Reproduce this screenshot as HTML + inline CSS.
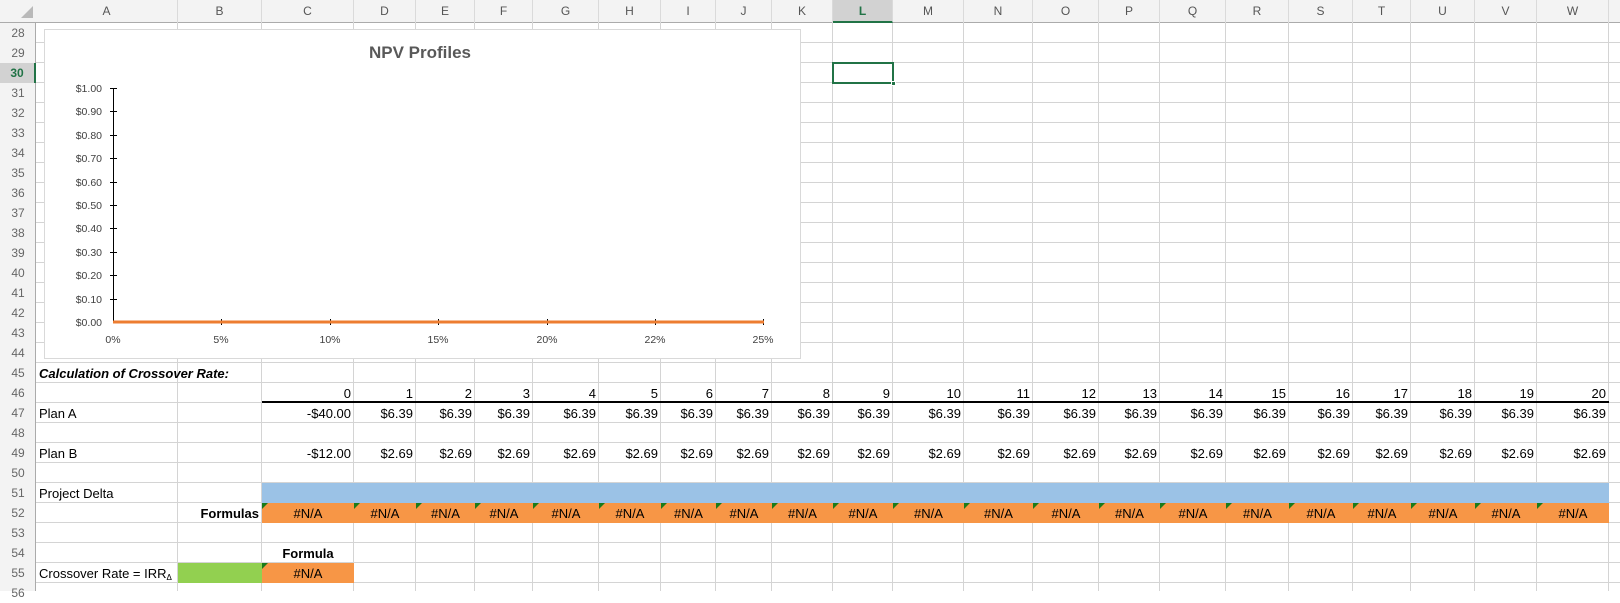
<!DOCTYPE html>
<html><head><meta charset="utf-8">
<style>
*{margin:0;padding:0;box-sizing:border-box}
body{width:1620px;height:591px;overflow:hidden;background:#fff;position:relative;font-family:"Liberation Sans",Arial,sans-serif}
.v{position:absolute;top:23px;width:1px;height:568px;background:#d4d4d4}
.h{position:absolute;left:36px;width:1584px;height:1px;background:#d4d4d4}
.ch{position:absolute;top:0;height:23px;line-height:23px;text-align:center;font-size:12px;color:#555;border-right:1px solid #dadada}
.rh{position:absolute;left:0;width:36px;height:20px;line-height:20px;text-align:center;font-size:12px;color:#666}
.t{position:absolute;height:20px;line-height:21px;font-size:13px;color:#000;white-space:nowrap;padding:0 3px}
.r{text-align:right}
.c{text-align:center}
.tri{position:absolute;width:0;height:0;border-top:6px solid #1a7a1a;border-right:6px solid transparent}
</style></head><body>
<div style="position:absolute;left:0;top:0;width:1620px;height:23px;background:#f3f3f3;border-bottom:1px solid #ababab"></div>
<div style="position:absolute;left:0;top:23px;width:36px;height:568px;background:#f3f3f3;border-right:1px solid #ababab"></div>
<svg style="position:absolute;left:20px;top:5px" width="14" height="14"><polygon points="13,1 13,13 1,13" fill="#b9b9b9"/></svg>
<div class="ch" style="left:36px;width:142px">A</div>
<div class="ch" style="left:178px;width:84px">B</div>
<div class="ch" style="left:262px;width:92px">C</div>
<div class="ch" style="left:354px;width:62px">D</div>
<div class="ch" style="left:416px;width:59px">E</div>
<div class="ch" style="left:475px;width:58px">F</div>
<div class="ch" style="left:533px;width:66px">G</div>
<div class="ch" style="left:599px;width:62px">H</div>
<div class="ch" style="left:661px;width:55px">I</div>
<div class="ch" style="left:716px;width:56px">J</div>
<div class="ch" style="left:772px;width:61px">K</div>
<div class="ch" style="left:833px;width:60px;background:#d2d2d2;color:#217346;font-weight:bold;border-bottom:2px solid #217346;line-height:22px">L</div>
<div class="ch" style="left:893px;width:71px">M</div>
<div class="ch" style="left:964px;width:69px">N</div>
<div class="ch" style="left:1033px;width:66px">O</div>
<div class="ch" style="left:1099px;width:61px">P</div>
<div class="ch" style="left:1160px;width:66px">Q</div>
<div class="ch" style="left:1226px;width:63px">R</div>
<div class="ch" style="left:1289px;width:64px">S</div>
<div class="ch" style="left:1353px;width:58px">T</div>
<div class="ch" style="left:1411px;width:64px">U</div>
<div class="ch" style="left:1475px;width:62px">V</div>
<div class="ch" style="left:1537px;width:72px">W</div>
<div class="rh" style="top:23px">28</div>
<div class="rh" style="top:43px">29</div>
<div class="rh" style="top:63px;background:#d2d2d2;color:#217346;font-weight:bold;border-right:2px solid #217346">30</div>
<div class="rh" style="top:83px">31</div>
<div class="rh" style="top:103px">32</div>
<div class="rh" style="top:123px">33</div>
<div class="rh" style="top:143px">34</div>
<div class="rh" style="top:163px">35</div>
<div class="rh" style="top:183px">36</div>
<div class="rh" style="top:203px">37</div>
<div class="rh" style="top:223px">38</div>
<div class="rh" style="top:243px">39</div>
<div class="rh" style="top:263px">40</div>
<div class="rh" style="top:283px">41</div>
<div class="rh" style="top:303px">42</div>
<div class="rh" style="top:323px">43</div>
<div class="rh" style="top:343px">44</div>
<div class="rh" style="top:363px">45</div>
<div class="rh" style="top:383px">46</div>
<div class="rh" style="top:403px">47</div>
<div class="rh" style="top:423px">48</div>
<div class="rh" style="top:443px">49</div>
<div class="rh" style="top:463px">50</div>
<div class="rh" style="top:483px">51</div>
<div class="rh" style="top:503px">52</div>
<div class="rh" style="top:523px">53</div>
<div class="rh" style="top:543px">54</div>
<div class="rh" style="top:563px">55</div>
<div class="rh" style="top:583px">56</div>
<div class="v" style="left:177px"></div><div class="v" style="left:261px"></div><div class="v" style="left:353px"></div><div class="v" style="left:415px"></div><div class="v" style="left:474px"></div><div class="v" style="left:532px"></div><div class="v" style="left:598px"></div><div class="v" style="left:660px"></div><div class="v" style="left:715px"></div><div class="v" style="left:771px"></div><div class="v" style="left:832px"></div><div class="v" style="left:892px"></div><div class="v" style="left:963px"></div><div class="v" style="left:1032px"></div><div class="v" style="left:1098px"></div><div class="v" style="left:1159px"></div><div class="v" style="left:1225px"></div><div class="v" style="left:1288px"></div><div class="v" style="left:1352px"></div><div class="v" style="left:1410px"></div><div class="v" style="left:1474px"></div><div class="v" style="left:1536px"></div><div class="v" style="left:1608px"></div>
<div class="h" style="top:42px"></div><div class="h" style="top:62px"></div><div class="h" style="top:82px"></div><div class="h" style="top:102px"></div><div class="h" style="top:122px"></div><div class="h" style="top:142px"></div><div class="h" style="top:162px"></div><div class="h" style="top:182px"></div><div class="h" style="top:202px"></div><div class="h" style="top:222px"></div><div class="h" style="top:242px"></div><div class="h" style="top:262px"></div><div class="h" style="top:282px"></div><div class="h" style="top:302px"></div><div class="h" style="top:322px"></div><div class="h" style="top:342px"></div><div class="h" style="top:362px"></div><div class="h" style="top:382px"></div><div class="h" style="top:402px"></div><div class="h" style="top:422px"></div><div class="h" style="top:442px"></div><div class="h" style="top:462px"></div><div class="h" style="top:482px"></div><div class="h" style="top:502px"></div><div class="h" style="top:522px"></div><div class="h" style="top:542px"></div><div class="h" style="top:562px"></div><div class="h" style="top:582px"></div>

<div style="position:absolute;left:44px;top:29px;width:757px;height:330px;background:#fff;border:1px solid #d9d9d9"></div>
<svg style="position:absolute;left:0;top:0" width="810" height="360" font-family="Liberation Sans, Arial, sans-serif">
<text x="420" y="58" font-size="17" font-weight="bold" fill="#595959" text-anchor="middle">NPV Profiles</text>
<g font-size="10.5" fill="#404040" text-anchor="end">
<text x="102" y="92">$1.00</text><text x="102" y="115">$0.90</text><text x="102" y="139">$0.80</text><text x="102" y="162">$0.70</text><text x="102" y="186">$0.60</text><text x="102" y="209">$0.50</text><text x="102" y="232">$0.40</text><text x="102" y="256">$0.30</text><text x="102" y="279">$0.20</text><text x="102" y="303">$0.10</text><text x="102" y="326">$0.00</text>
</g>
<g stroke="#000" stroke-width="1">
<line x1="113.5" y1="88" x2="113.5" y2="322"/>
<line x1="110" y1="88.5" x2="117" y2="88.5"/>
<line x1="110" y1="111.5" x2="117" y2="111.5"/><line x1="110" y1="135.5" x2="117" y2="135.5"/><line x1="110" y1="158.5" x2="117" y2="158.5"/><line x1="110" y1="182.5" x2="117" y2="182.5"/><line x1="110" y1="205.5" x2="117" y2="205.5"/><line x1="110" y1="228.5" x2="117" y2="228.5"/><line x1="110" y1="252.5" x2="117" y2="252.5"/><line x1="110" y1="275.5" x2="117" y2="275.5"/><line x1="110" y1="299.5" x2="117" y2="299.5"/>
<line x1="221.5" y1="319" x2="221.5" y2="325"/><line x1="330.5" y1="319" x2="330.5" y2="325"/><line x1="438.5" y1="319" x2="438.5" y2="325"/><line x1="547.5" y1="319" x2="547.5" y2="325"/><line x1="655.5" y1="319" x2="655.5" y2="325"/><line x1="763.5" y1="319" x2="763.5" y2="325"/>
</g>
<line x1="113" y1="322" x2="764" y2="322" stroke="#ed7d31" stroke-width="3"/>
<g font-size="10.5" fill="#404040" text-anchor="middle">
<text x="113" y="343">0%</text><text x="221" y="343">5%</text><text x="330" y="343">10%</text><text x="438" y="343">15%</text><text x="547" y="343">20%</text><text x="655" y="343">22%</text><text x="763" y="343">25%</text>
</g>
</svg>

<div style="position:absolute;left:832px;top:62px;width:62px;height:22px;border:2px solid #217346"></div>
<div style="position:absolute;left:891px;top:81px;width:5px;height:5px;background:#217346;border:1px solid #fff"></div>

<div class="t" style="left:36px;top:363px;font-weight:bold;font-style:italic">Calculation of Crossover Rate:</div>
<div class="t r" style="left:262px;top:383px;width:92px">0</div>
<div class="t r" style="left:354px;top:383px;width:62px">1</div>
<div class="t r" style="left:416px;top:383px;width:59px">2</div>
<div class="t r" style="left:475px;top:383px;width:58px">3</div>
<div class="t r" style="left:533px;top:383px;width:66px">4</div>
<div class="t r" style="left:599px;top:383px;width:62px">5</div>
<div class="t r" style="left:661px;top:383px;width:55px">6</div>
<div class="t r" style="left:716px;top:383px;width:56px">7</div>
<div class="t r" style="left:772px;top:383px;width:61px">8</div>
<div class="t r" style="left:833px;top:383px;width:60px">9</div>
<div class="t r" style="left:893px;top:383px;width:71px">10</div>
<div class="t r" style="left:964px;top:383px;width:69px">11</div>
<div class="t r" style="left:1033px;top:383px;width:66px">12</div>
<div class="t r" style="left:1099px;top:383px;width:61px">13</div>
<div class="t r" style="left:1160px;top:383px;width:66px">14</div>
<div class="t r" style="left:1226px;top:383px;width:63px">15</div>
<div class="t r" style="left:1289px;top:383px;width:64px">16</div>
<div class="t r" style="left:1353px;top:383px;width:58px">17</div>
<div class="t r" style="left:1411px;top:383px;width:64px">18</div>
<div class="t r" style="left:1475px;top:383px;width:62px">19</div>
<div class="t r" style="left:1537px;top:383px;width:72px">20</div>
<div style="position:absolute;left:262px;top:401px;width:1347px;height:2px;background:#000"></div>
<div class="t" style="left:36px;top:403px">Plan A</div>
<div class="t r" style="left:262px;top:403px;width:92px">-$40.00</div>
<div class="t r" style="left:354px;top:403px;width:62px">$6.39</div>
<div class="t r" style="left:416px;top:403px;width:59px">$6.39</div>
<div class="t r" style="left:475px;top:403px;width:58px">$6.39</div>
<div class="t r" style="left:533px;top:403px;width:66px">$6.39</div>
<div class="t r" style="left:599px;top:403px;width:62px">$6.39</div>
<div class="t r" style="left:661px;top:403px;width:55px">$6.39</div>
<div class="t r" style="left:716px;top:403px;width:56px">$6.39</div>
<div class="t r" style="left:772px;top:403px;width:61px">$6.39</div>
<div class="t r" style="left:833px;top:403px;width:60px">$6.39</div>
<div class="t r" style="left:893px;top:403px;width:71px">$6.39</div>
<div class="t r" style="left:964px;top:403px;width:69px">$6.39</div>
<div class="t r" style="left:1033px;top:403px;width:66px">$6.39</div>
<div class="t r" style="left:1099px;top:403px;width:61px">$6.39</div>
<div class="t r" style="left:1160px;top:403px;width:66px">$6.39</div>
<div class="t r" style="left:1226px;top:403px;width:63px">$6.39</div>
<div class="t r" style="left:1289px;top:403px;width:64px">$6.39</div>
<div class="t r" style="left:1353px;top:403px;width:58px">$6.39</div>
<div class="t r" style="left:1411px;top:403px;width:64px">$6.39</div>
<div class="t r" style="left:1475px;top:403px;width:62px">$6.39</div>
<div class="t r" style="left:1537px;top:403px;width:72px">$6.39</div>
<div class="t" style="left:36px;top:443px">Plan B</div>
<div class="t r" style="left:262px;top:443px;width:92px">-$12.00</div>
<div class="t r" style="left:354px;top:443px;width:62px">$2.69</div>
<div class="t r" style="left:416px;top:443px;width:59px">$2.69</div>
<div class="t r" style="left:475px;top:443px;width:58px">$2.69</div>
<div class="t r" style="left:533px;top:443px;width:66px">$2.69</div>
<div class="t r" style="left:599px;top:443px;width:62px">$2.69</div>
<div class="t r" style="left:661px;top:443px;width:55px">$2.69</div>
<div class="t r" style="left:716px;top:443px;width:56px">$2.69</div>
<div class="t r" style="left:772px;top:443px;width:61px">$2.69</div>
<div class="t r" style="left:833px;top:443px;width:60px">$2.69</div>
<div class="t r" style="left:893px;top:443px;width:71px">$2.69</div>
<div class="t r" style="left:964px;top:443px;width:69px">$2.69</div>
<div class="t r" style="left:1033px;top:443px;width:66px">$2.69</div>
<div class="t r" style="left:1099px;top:443px;width:61px">$2.69</div>
<div class="t r" style="left:1160px;top:443px;width:66px">$2.69</div>
<div class="t r" style="left:1226px;top:443px;width:63px">$2.69</div>
<div class="t r" style="left:1289px;top:443px;width:64px">$2.69</div>
<div class="t r" style="left:1353px;top:443px;width:58px">$2.69</div>
<div class="t r" style="left:1411px;top:443px;width:64px">$2.69</div>
<div class="t r" style="left:1475px;top:443px;width:62px">$2.69</div>
<div class="t r" style="left:1537px;top:443px;width:72px">$2.69</div>
<div class="t" style="left:36px;top:483px">Project Delta</div>
<div style="position:absolute;left:262px;top:483px;width:1347px;height:20px;background:#9bc2e6"></div>
<div style="position:absolute;left:262px;top:503px;width:1347px;height:20px;background:#f79646"></div>
<div class="t r" style="left:178px;top:503px;width:84px;font-weight:bold">Formulas</div>
<div class="t c" style="left:262px;top:503px;width:92px">#N/A</div><div class="tri" style="left:262px;top:503px"></div>
<div class="t c" style="left:354px;top:503px;width:62px">#N/A</div><div class="tri" style="left:354px;top:503px"></div>
<div class="t c" style="left:416px;top:503px;width:59px">#N/A</div><div class="tri" style="left:416px;top:503px"></div>
<div class="t c" style="left:475px;top:503px;width:58px">#N/A</div><div class="tri" style="left:475px;top:503px"></div>
<div class="t c" style="left:533px;top:503px;width:66px">#N/A</div><div class="tri" style="left:533px;top:503px"></div>
<div class="t c" style="left:599px;top:503px;width:62px">#N/A</div><div class="tri" style="left:599px;top:503px"></div>
<div class="t c" style="left:661px;top:503px;width:55px">#N/A</div><div class="tri" style="left:661px;top:503px"></div>
<div class="t c" style="left:716px;top:503px;width:56px">#N/A</div><div class="tri" style="left:716px;top:503px"></div>
<div class="t c" style="left:772px;top:503px;width:61px">#N/A</div><div class="tri" style="left:772px;top:503px"></div>
<div class="t c" style="left:833px;top:503px;width:60px">#N/A</div><div class="tri" style="left:833px;top:503px"></div>
<div class="t c" style="left:893px;top:503px;width:71px">#N/A</div><div class="tri" style="left:893px;top:503px"></div>
<div class="t c" style="left:964px;top:503px;width:69px">#N/A</div><div class="tri" style="left:964px;top:503px"></div>
<div class="t c" style="left:1033px;top:503px;width:66px">#N/A</div><div class="tri" style="left:1033px;top:503px"></div>
<div class="t c" style="left:1099px;top:503px;width:61px">#N/A</div><div class="tri" style="left:1099px;top:503px"></div>
<div class="t c" style="left:1160px;top:503px;width:66px">#N/A</div><div class="tri" style="left:1160px;top:503px"></div>
<div class="t c" style="left:1226px;top:503px;width:63px">#N/A</div><div class="tri" style="left:1226px;top:503px"></div>
<div class="t c" style="left:1289px;top:503px;width:64px">#N/A</div><div class="tri" style="left:1289px;top:503px"></div>
<div class="t c" style="left:1353px;top:503px;width:58px">#N/A</div><div class="tri" style="left:1353px;top:503px"></div>
<div class="t c" style="left:1411px;top:503px;width:64px">#N/A</div><div class="tri" style="left:1411px;top:503px"></div>
<div class="t c" style="left:1475px;top:503px;width:62px">#N/A</div><div class="tri" style="left:1475px;top:503px"></div>
<div class="t c" style="left:1537px;top:503px;width:72px">#N/A</div><div class="tri" style="left:1537px;top:503px"></div>
<div class="t c" style="left:262px;top:543px;width:92px;font-weight:bold">Formula</div>
<div class="t" style="left:36px;top:563px">Crossover Rate = IRR<sub style="font-size:8px;vertical-align:-2px">Δ</sub></div>
<div style="position:absolute;left:178px;top:563px;width:84px;height:20px;background:#92d050"></div>
<div style="position:absolute;left:262px;top:563px;width:92px;height:20px;background:#f79646"></div>
<div class="t c" style="left:262px;top:563px;width:92px">#N/A</div><div class="tri" style="left:262px;top:563px"></div>
</body></html>
